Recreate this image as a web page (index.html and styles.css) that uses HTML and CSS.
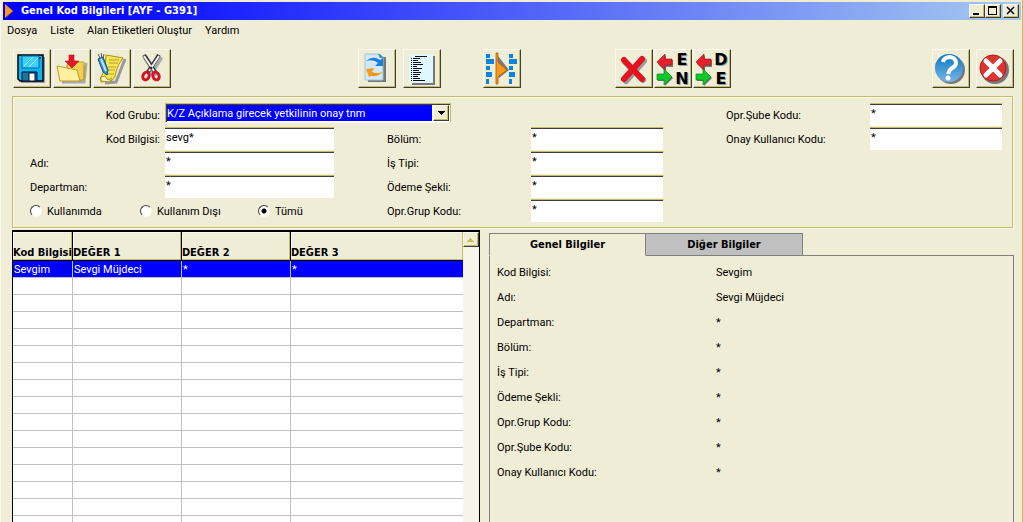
FILE: index.html
```html
<!DOCTYPE html>
<html lang="tr">
<head>
<meta charset="utf-8">
<title>Genel Kod Bilgileri [AYF - G391]</title>
<link rel="stylesheet" href="styles.css">
</head>
<body>
<div class="window">
  <header class="titlebar">
    <svg class="app-icon" width="16" height="16" viewBox="0 0 16 16"><path d="M2 1l8 7-8 7z" fill="#f99a1c"/><path d="M2 15l8-7" stroke="#a55a10"/></svg>
    <h1 class="title">Genel Kod Bilgileri [AYF - G391]</h1>
    <div class="winbtns">
      <button class="winbtn" aria-label="Simge durumuna küçült"><svg width="14" height="12"><path d="M3 8h6v2H3z"/></svg></button>
      <button class="winbtn" aria-label="Ekranı kapla"><svg width="14" height="12"><path d="M2 1h9v9H2zM3 3v6h7V3z" fill-rule="evenodd"/></svg></button>
      <button class="winbtn close" aria-label="Kapat"><svg width="14" height="12"><path d="M3 2l7 7M10 2l-7 7" stroke="#000" stroke-width="1.5"/></svg></button>
    </div>
  </header>
  <nav class="menu">
    <button class="menu-item">Dosya</button>
    <button class="menu-item">Liste</button>
    <button class="menu-item">Alan Etiketleri Oluştur</button>
    <button class="menu-item">Yardım</button>
  </nav>
  <div class="toolbar">
    <div class="group files">
      <button class="tool" aria-label="Kaydet"><svg width="36" height="36" viewBox="0 0 36 36"><path d="M6 6h25v26H7z" fill="#999"/><path d="M4 4h25v26H6l-2-2z" fill="#10b4f0" stroke="#000" stroke-width="1.5"/><path d="M8 5h17v12H8z" fill="#3fd0f8" stroke="#06a"/><path d="M10 15l9-9M15 16l9-9" stroke="#a5f2ff"/><path d="M8 21h15v9H8z" fill="#17789c" stroke="#013"/><path d="M15 22h6v8h-6z" fill="#fff" stroke="#013"/><path d="M26 6v2" stroke="#000"/></svg></button>
      <button class="tool" aria-label="Aç"><svg width="36" height="36" viewBox="0 0 36 36"><path d="M8 31h22l2-19" fill="none" stroke="#aaa" stroke-width="3"/><path d="M13 13h8l2-2h7v18H13z" fill="#f1cf50" stroke="#c8a030"/><path d="M3 15l20 4 3 11H6z" fill="#fff0a0" stroke="#c09a28"/><path d="M26 30l4-2V14" fill="none" stroke="#c09a28"/><path d="M15 4h5v6h5l-7 7-7-7h4z" fill="#e41825" stroke="#b01018" stroke-width=".6"/></svg></button>
      <button class="tool" aria-label="Düzenle"><svg width="36" height="36" viewBox="0 0 36 36"><path d="M11 32l11-1 9-23" fill="none" stroke="#999" stroke-width="3"/><path d="M12 4l6 1 11 2q-5 6-7 14-1 7-5 9l-10 1q-2-4 2-9 3-8 3-18z" fill="#f6e656" stroke="#a89018"/><path d="M15 9h10M15 12h9M14 16h8M13 19h8M11 23h9" stroke="#b8a020"/><path d="M7 30q-1-5 4-5l3 4 4-2-3 4z" fill="#fffbc0" stroke="#a89018"/><path d="M4 8l5-2 5 13-1 5-4-3z" fill="#3c94d4" stroke="#15507c"/><path d="M7 8l5 12" stroke="#b8e4ff" stroke-width="2"/><path d="M4 3l2 4M7 2l1 5M10 3l-1 4" stroke="#555"/></svg></button>
      <button class="tool" aria-label="Kes"><svg width="36" height="36" viewBox="0 0 36 36"><path d="M11 6l12 18M27 6L16 24" stroke="#aaa" stroke-width="5"/><path d="M10 4l11 17M25 4L14 21" stroke="#333" stroke-width="4"/><path d="M10 5l10 15M25 5L15 20" stroke="#f5f5f5" stroke-width="2"/><circle cx="17" cy="17" r="1.500" fill="#333"/><ellipse cx="12" cy="25" rx="3" ry="4" transform="rotate(25 12 25)" fill="none" stroke="#d01525" stroke-width="3"/><ellipse cx="22" cy="25" rx="3" ry="4" transform="rotate(-25 22 25)" fill="none" stroke="#d01525" stroke-width="3"/></svg></button>
    </div>
    <div class="group views">
      <button class="tool" aria-label="Yenile"><svg width="36" height="36" viewBox="0 0 36 36"><path d="M9 6h18v25H9z" fill="#777"/><path d="M6 3h14l4 4v22H6z" fill="#d2eaf8" stroke="#9cc4d8"/><path d="M19 3h2l4 4h-4z" fill="#3090d8"/><path d="M7 10q7-6 14-1l3-2v8h-8l3-3q-4-4-12-2z" fill="#1d7fd6"/><path d="M24 21q-5 5-12 4l-2 1-3-8 8-1-2 4q5 2 11 0z" fill="#f79a1c"/></svg></button>
      <button class="tool" aria-label="Liste"><svg width="36" height="36" viewBox="0 0 36 36"><path d="M8 5h23v29H8z" fill="#777"/><path d="M5 3h24v29H5z" fill="#dff8ff"/><g shape-rendering="crispEdges"><path d="M7 7h1v1H7zM7 9h1v1H7zM7 11h1v1H7zM7 13h1v1H7zM7 15h1v1H7zM7 17h1v1H7zM7 19h1v1H7zM7 21h1v1H7zM7 23h1v1H7zM7 25h1v1H7zM7 27h1v1H7zM7 29h1v1H7zM11 5h12v1H11zM9 7h7v1H9zM9 9h5v1H9zM9 11h8v1H9zM9 13h10v1H9zM9 15h4v1H9zM9 17h9v1H9zM9 19h6v1H9zM9 21h8v1H9zM9 23h7v1H9zM9 25h5v1H9zM9 27h7v1H9zM9 29h12v1H9z" fill="#111"/></g></svg></button>
    </div>
    <div class="group align">
      <button class="tool" aria-label="Sütunlar"><svg width="36" height="36" viewBox="0 0 36 36"><path d="M2 3h4v4H2zM2 8h8v5H2zM2 15h4v4H2zM2 21h6v5H2zM2 28h3v5H2zM25 3h4v4h-4zM25 8h8v5h-8zM25 15h4v4h-4zM25 21h6v5h-6zM25 28h3v5h-3z" fill="#0a84e0"/><path d="M14 5l11 14-10 8v7" fill="#777"/><path d="M12 2h2v9l9 8-9 7v7h-2z" fill="#f8981d" stroke="#a55a10" stroke-width=".8"/></svg></button>
    </div>
    <div class="group langs">
      <button class="tool" aria-label="Sil"><svg width="36" height="36" viewBox="0 0 36 36"><path d="M9 11l18 18M28 10L10 30" stroke="#999" stroke-width="6" stroke-linecap="round"/><path d="M8 9l18 19M26 8L8 28" stroke="#e31420" stroke-width="6" stroke-linecap="round"/></svg></button>
      <button class="tool lang"><svg width="18" height="34" viewBox="0 0 18 34"><path d="M2 12l8-9v5h7v7h-7v5z" fill="#777"/><path d="M1 10l8-8v5h7v6H9v5z" fill="#e8202c" stroke="#901018" stroke-width=".6"/><path d="M17 26l-8 8v-5H2v-7h7v-4z" fill="#777"/><path d="M16 25l-8 8v-5H1v-6h7v-5z" fill="#10c828" stroke="#087a18" stroke-width=".6"/></svg><span class="letters">E<br>N</span></button>
      <button class="tool lang"><svg width="18" height="34" viewBox="0 0 18 34"><path d="M2 12l8-9v5h7v7h-7v5z" fill="#777"/><path d="M1 10l8-8v5h7v6H9v5z" fill="#e8202c" stroke="#901018" stroke-width=".6"/><path d="M17 26l-8 8v-5H2v-7h7v-4z" fill="#777"/><path d="M16 25l-8 8v-5H1v-6h7v-5z" fill="#10c828" stroke="#087a18" stroke-width=".6"/></svg><span class="letters">D<br>E</span></button>
    </div>
    <div class="group end">
      <button class="tool" aria-label="Yardım"><svg width="36" height="36" viewBox="0 0 36 36"><defs><linearGradient id="b" x2="0" y2="1"><stop stop-color="#0878c0"/><stop offset="1" stop-color="#7ab4e4"/></linearGradient></defs><circle cx="18" cy="19" r="14" fill="#777"/><circle cx="16" cy="17" r="14" fill="url(#b)"/><path d="M10 11q1-5 7-5 6 1 6 6 0 3-4 5-3 2-4 6" fill="none" stroke="#fff" stroke-width="4"/><circle cx="15" cy="27" r="2.500" fill="#fff"/></svg></button>
      <button class="tool" aria-label="Çıkış"><svg width="36" height="36" viewBox="0 0 36 36"><circle cx="18" cy="19" r="14" fill="#777"/><circle cx="16" cy="17" r="13" fill="#dd3430" stroke="#b81818"/><path d="M9 10l14 14M23 10L9 24" stroke="#fff" stroke-width="5" stroke-linecap="round"/></svg></button>
    </div>
  </div>

  <form class="filter">
    <label class="lbl right r1" for="grup">Kod Grubu:</label>
    <div class="combo r1"><select id="grup"><option>K/Z Açıklama girecek yetkilinin onay tnm</option></select><svg class="arrow" width="16" height="16"><path d="M4 5h7v1H4zM5 6h5v1H5zM6 7h3v1H6zM7 8h1v1H7z"/></svg></div>
    <label class="lbl right r2" for="bilgi">Kod Bilgisi:</label><input class="field f1 r2" id="bilgi" value="sevg*">
    <label class="lbl r3" for="adi">Adı:</label><input class="field f1 r3" id="adi" value="*">
    <label class="lbl r4" for="dep">Departman:</label><input class="field f1 r4" id="dep" value="*">
    <div class="radios">
      <label class="radio"><input type="radio" name="durum">Kullanımda</label>
      <label class="radio"><input type="radio" name="durum">Kullanım Dışı</label>
      <label class="radio"><input type="radio" name="durum" checked>Tümü</label>
    </div>
    <label class="lbl l2 r2" for="bolum">Bölüm:</label><input class="field f2 r2" id="bolum" value="*">
    <label class="lbl l2 r3" for="tip">İş Tipi:</label><input class="field f2 r3" id="tip" value="*">
    <label class="lbl l2 r4" for="odeme">Ödeme Şekli:</label><input class="field f2 r4" id="odeme" value="*">
    <label class="lbl l2 r5" for="oprgrup">Opr.Grup Kodu:</label><input class="field f2 r5" id="oprgrup" value="*">
    <label class="lbl l3 r1" for="sube">Opr.Şube Kodu:</label><input class="field f3 r1" id="sube" value="*">
    <label class="lbl l3 r2" for="onay">Onay Kullanıcı Kodu:</label><input class="field f3 r2" id="onay" value="*">
  </form>

  <main class="lower">
    <section class="list">
      <table class="grid">
        <colgroup><col class="c1"><col class="c2"><col class="c2"><col></colgroup>
        <thead><tr><th>Kod Bilgisi</th><th>DEĞER 1</th><th>DEĞER 2</th><th>DEĞER 3</th></tr></thead>
        <tbody>
          <tr class="selected"><td>Sevgim</td><td>Sevgi Müjdeci</td><td>*</td><td>*</td></tr>
          <tr><td></td><td></td><td></td><td></td></tr><tr><td></td><td></td><td></td><td></td></tr>
          <tr><td></td><td></td><td></td><td></td></tr><tr><td></td><td></td><td></td><td></td></tr>
          <tr><td></td><td></td><td></td><td></td></tr><tr><td></td><td></td><td></td><td></td></tr>
          <tr><td></td><td></td><td></td><td></td></tr><tr><td></td><td></td><td></td><td></td></tr>
          <tr><td></td><td></td><td></td><td></td></tr><tr><td></td><td></td><td></td><td></td></tr>
          <tr><td></td><td></td><td></td><td></td></tr><tr><td></td><td></td><td></td><td></td></tr>
          <tr><td></td><td></td><td></td><td></td></tr><tr><td></td><td></td><td></td><td></td></tr>
          <tr><td></td><td></td><td></td><td></td></tr>
        </tbody>
      </table>
      <div class="scroll"><button class="up" aria-label="Yukarı kaydır"><svg width="14" height="13"><path d="M6 5h1v1h1v1h1v1h1v1H3V8h1V7h1V6h1z" fill="#c6bd62"/></svg></button></div>
    </section>
    <section class="details">
      <div class="tabs"><button class="tab active">Genel Bilgiler</button><button class="tab">Diğer Bilgiler</button></div>
      <dl class="pane">
        <dt>Kod Bilgisi:</dt><dd>Sevgim</dd>
        <dt>Adı:</dt><dd>Sevgi Müjdeci</dd>
        <dt>Departman:</dt><dd>*</dd>
        <dt>Bölüm:</dt><dd>*</dd>
        <dt>İş Tipi:</dt><dd>*</dd>
        <dt>Ödeme Şekli:</dt><dd>*</dd>
        <dt>Opr.Grup Kodu:</dt><dd>*</dd>
        <dt>Opr.Şube Kodu:</dt><dd>*</dd>
        <dt>Onay Kullanıcı Kodu:</dt><dd>*</dd>
      </dl>
    </section>
  </main>
</div>
</body>
</html>
```
FILE: styles.css
```css
* { box-sizing: border-box; }
body { margin: 0; }
body, button, input, select {
  font-family: Roboto, Tahoma, sans-serif;
  font-size: 11px;
  color: #000;
}
button { padding: 0; border: 0; background: none; }
svg { display: block; }

.window {
  display: flex;
  flex-direction: column;
  height: 100vh;
  overflow: hidden;
  padding-left: 2px;
  background: #f0edd6;
  border-left: 1px solid #faf8ee;
  border-right: 1px solid #c6bd62;
}

/* title bar */
.titlebar {
  display: flex;
  align-items: center;
  height: 18px;
  flex: none;
  margin: 2px 1px 0 0;
  background: linear-gradient(90deg, #00f 0%, #00f 6%, #a6caf0 100%);
}
.app-icon { margin-right: 2px; }
.title { margin: 0; flex: 1; line-height: 18px; color: #fff; }
.title, .grid th, .tab {
  font-family: "DejaVu Sans Condensed", Tahoma, sans-serif;
  font-size: 11px;
  font-weight: bold;
}
.winbtns { display: flex; padding-right: 2px; }
.winbtn, .tool, .arrow, .up {
  background: #f0edd6;
  border: 1px solid;
  border-color: #faf8ee #403c3c #403c3c #faf8ee;
  box-shadow: inset -1px -1px #c6bd62;
}
.winbtn { width: 16px; height: 14px; }
.close { margin-left: 2px; }

.menu { display: flex; flex: none; gap: 13px; height: 29px; padding-left: 4px; }
.menu-item { height: 20px; }

/* toolbar */
.toolbar { display: flex; flex: none; height: 47px; padding: 0 8px 0 10px; }
.group { display: flex; gap: 2px; }
.tool { width: 38px; height: 39px; }
.views { margin-left: 187px; gap: 7px; }
.align { margin-left: 42px; }
.langs { margin-left: 94px; gap: 1px; }
.end { margin-left: auto; gap: 6px; }
.lang { display: flex; align-items: center; justify-content: center; }
.letters {
  width: 16px;
  font-family: "DejaVu Sans", sans-serif;
  font-weight: bold;
  font-size: 16px;
  line-height: 19px;
  text-align: center;
  text-shadow: 1px 1px #999;
}

/* filter form */
.filter {
  display: grid;
  flex: none;
  grid-template-columns: 135px 170px 52px 144px 133px 62px 144px 133px;
  grid-template-rows: repeat(5, 24px);
  align-items: center;
  margin: 0 9px 2px;
  padding: 6px 0 4px 17px;
  border: 1px solid #c6bd62;
  box-shadow: inset 1px 1px #faf8ee, 1px 1px #faf8ee;
}
.r1 { grid-row: 1; } .r2 { grid-row: 2; } .r3 { grid-row: 3; } .r4 { grid-row: 4; } .r5 { grid-row: 5; }
.lbl { grid-column: 1; }
.right { text-align: right; padding-right: 5px; }
.l2 { grid-column: 4; }
.l3 { grid-column: 7; }
.f1 { grid-column: 2; }
.f2 { grid-column: 5; }
.f3 { grid-column: 8; }
.field {
  width: 100%;
  height: 24px;
  padding: 0 0 4px 1px;
  background: #fff;
  border: 0;
  border-top: 1px solid #c6bd62;
  border-right: 1px solid #f0edd6;
  border-bottom: 1px solid #f0edd6;
  box-shadow: inset 0 1px #403c3c;
  outline: 0;
}
.combo {
  grid-column: 2 / span 3;
  align-self: start;
  justify-self: start;
  display: flex;
  width: 286px;
  height: 20px;
  border: 1px solid #c6bd62;
  border-bottom-color: #faf8ee;
  background: #fff;
  box-shadow: inset 1px 1px #403c3c;
  padding: 1px;
}
.combo select {
  flex: 1;
  min-width: 0;
  appearance: none;
  border: 0;
  padding: 0;
  color: #fff;
  background: #00f;
}
.arrow { flex: none; margin-left: 1px; }
.radios { grid-area: 5 / 1 / 6 / 4; display: grid; grid-template-columns: 110px 118px auto; }
.radio { display: flex; align-items: center; gap: 5px; }
.radio input {
  appearance: none;
  width: 12px;
  height: 12px;
  margin: 0;
  border-radius: 50%;
  border: 1px solid;
  border-color: #403c3c #faf8ee #faf8ee #403c3c;
  background: #fff;
}
.radio input:checked { background: radial-gradient(circle, #000 2px, #fff 3px); }

/* lower area */
.lower { display: flex; flex: 1; min-height: 0; }
.list {
  display: flex;
  align-items: stretch;
  flex: 0 1 468px;
  margin-left: 9px;
  border: solid #000;
  border-width: 2px 1px 0 1px;
  overflow: hidden;
}
.grid { flex: 1; border-collapse: separate; border-spacing: 0; table-layout: fixed; background: #fff; align-self: flex-start; }
.c1 { width: 59px; }
.c2 { width: 109px; }
.grid th {
  height: 29px;
  padding: 0 0 1px;
  text-align: left;
  vertical-align: bottom;
  white-space: nowrap;
  background: #f0edd6;
  border-right: 1px solid #000;
  border-bottom: 1px solid #000;
  box-shadow: inset -1px -1px #c6bd62, inset 1px 1px #faf8ee;
}
.grid td { height: 17px; padding: 0 0 0 1px; border-right: 1px solid #c0c0c0; border-bottom: 1px solid #c0c0c0; }
.grid th:last-child, .grid td:last-child { border-right: 0; }
.selected td { color: #fff; background: #00f; }
.scroll { width: 16px; flex: none; background: #f7f5ea; }
.up { width: 16px; height: 15px; }

.details { display: flex; flex-direction: column; flex: 1; margin: 3px 8px 0 9px; }
.tabs { display: flex; height: 23px; flex: none; border-bottom: 1px solid #808080; }
.tab {
  width: 157px;
  height: 23px;
  background: #c0c0c0;
  border: 1px solid #808080;
  border-left: 0;
}
.active { background: #f0edd6; border-left: 1px solid #808080; border-bottom-color: #f0edd6; }
.pane {
  flex: 1;
  display: grid;
  grid-template-columns: 219px 1fr;
  grid-auto-rows: 25px;
  align-items: center;
  align-content: start;
  margin: 0;
  padding: 4px 0 0 7px;
  border: solid #808080;
  border-width: 0 1px;
}
.pane dd { margin: 0; }
```
